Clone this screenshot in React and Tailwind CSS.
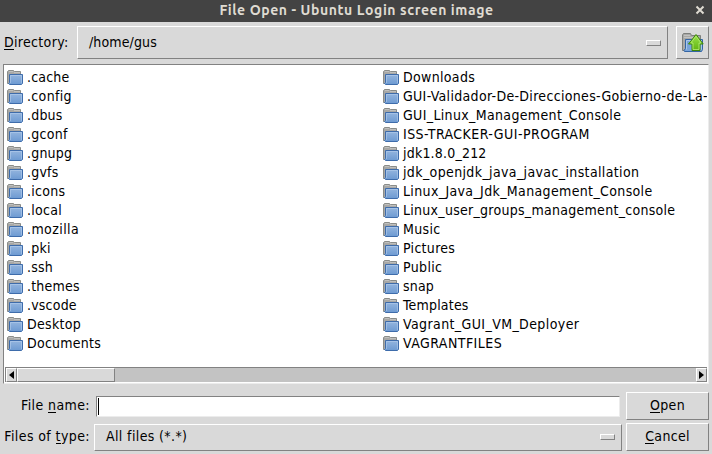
const leftFiles = [
  { name: '.cache' }, { name: '.config', tracking: 'tracking-[0.34px]' }, { name: '.dbus' },
  { name: '.gconf', tracking: 'tracking-[0.3px]' },
  { name: '.gnupg' }, { name: '.gvfs' }, { name: '.icons', tracking: 'tracking-[0.3px]' },
  { name: '.local', tracking: 'tracking-[0.3px]' },
  { name: '.mozilla', tracking: 'tracking-[0.42px]' }, { name: '.pki' }, { name: '.ssh' },
  { name: '.themes' }, { name: '.vscode' }, { name: 'Desktop', tracking: 'tracking-[0.3px]' },
  { name: 'Documents', tracking: 'tracking-[0.25px]' },
];

const rightFiles = [
  { name: 'Downloads', tracking: 'tracking-[0.33px]' },
  { name: 'GUI-Validador-De-Direcciones-Gobierno-de-La-', tracking: 'tracking-[0.32px]' },
  { name: 'GUI_Linux_Management_Console', tracking: 'tracking-[0.35px]' },
  { name: 'ISS-TRACKER-GUI-PROGRAM', tracking: 'tracking-[0.45px]' },
  { name: 'jdk1.8.0_212', tracking: 'tracking-[0.2px]' },
  { name: 'jdk_openjdk_java_javac_installation', tracking: 'tracking-[0.37px]' },
  { name: 'Linux_Java_Jdk_Management_Console', tracking: 'tracking-[0.36px]' },
  { name: 'Linux_user_groups_management_console', tracking: 'tracking-[0.28px]' },
  { name: 'Music', tracking: 'tracking-[0.35px]' }, { name: 'Pictures', tracking: 'tracking-[0.3px]' },
  { name: 'Public', tracking: 'tracking-[0.35px]' }, { name: 'snap' },
  { name: 'Templates', tracking: 'tracking-[0.2px]' },
  { name: 'Vagrant_GUI_VM_Deployer', tracking: 'tracking-[0.4px]' },
  { name: 'VAGRANTFILES', tracking: 'tracking-[0.45px]' },
];

const raised = 'border border-t-white border-l-white border-r-[#828282] border-b-[#828282] bg-[#d9d9d9]';

function FolderIcon() {
  return (
    <svg width="16" height="15" viewBox="0 0 16 15" className="block shrink-0">
      <defs>
        <linearGradient id="folderBlue" x1="0" y1="0" x2="0" y2="1">
          <stop offset="0" stopColor="#94b5de" />
          <stop offset="1" stopColor="#6d9ad2" />
        </linearGradient>
      </defs>
      <path d="M.5 13.500V1.500L1.500 .5H6.500L7.500 1.500H13.500V13.500Z" fill="#a8a8a6" stroke="#8a8c89" />
      <path d="M2 1.500H6M7 2.500H13" stroke="#c0c0be" />
      <path d="M2.500 4.500H15.500V13.500L14.500 14.500H2.500L1.500 13.500L2.500 12.500Z" fill="url(#folderBlue)" stroke="#3e6cab" strokeLinejoin="round" />
      <path d="M3.500 13V5.500H14.500V13" fill="none" stroke="#b8d0ec" strokeOpacity=".55" />
    </svg>
  );
}

function UpFolderIcon() {
  return (
    <svg width="22" height="20" viewBox="0 0 22 20" className="block">
      <defs>
        <linearGradient id="arrowGreen" x1="0" y1="0" x2="0" y2="1">
          <stop offset="0" stopColor="#9be34c" />
          <stop offset="1" stopColor="#5fb30e" />
        </linearGradient>
      </defs>
      <path d="M.5 17.500V2L1.500 .5H8.500L9.500 2.500H18.500V17.500Z" fill="#a8a8a6" stroke="#7d7f7c" />
      <path d="M2 2.500H8M2 4.500H17" stroke="#c2c2c0" />
      <path d="M3.500 6.500H20.500V16.500L19.500 18.500H2.500L2 17.500L3.500 15.500Z" fill="#78a4d9" stroke="#3465a4" strokeLinejoin="round" />
      <path d="M4.500 16.500V7.500H19.500V16.500" fill="none" stroke="#a9c7ea" />
      <path d="M14 1.500L21.200 11H18V17.500H10V11H6.500Z" fill="url(#arrowGreen)" stroke="#3e8608" strokeLinejoin="round" />
      <path d="M14 3.300L19 10H17V16.500H11V10H8.800Z" fill="none" stroke="#b7ec78" strokeOpacity=".8" />
    </svg>
  );
}

function FileColumn({ files, className }) {
  return (
    <ul className={className}>
      {files.map(({ name, tracking = 'tracking-[0.2px]' }) => (
        <li key={name} className="flex h-[19px] items-center gap-1 whitespace-nowrap">
          <FolderIcon />
          <span className={tracking}>{name}</span>
        </li>
      ))}
    </ul>
  );
}

function Mnemonic({ children }) {
  return <span className="inline-block h-[16px] border-b border-black leading-[16px]">{children}</span>;
}

function MenuIndicator() {
  return <span className="h-[6px] w-[15px] border border-t-white border-l-white border-r-[#828282] border-b-[#828282]" />;
}

export default function App() {
  return (
    <div className="flex h-[454px] w-[712px] flex-col overflow-hidden bg-[#d9d9d9] font-['DejaVu_Sans_Condensed','DejaVu_Sans',sans-serif] text-[14px] leading-[19px] text-black [font-stretch:condensed]">
      <header className="flex h-[22px] shrink-0 items-center bg-[#434343] text-[#dfdbd2]">
        <h1 className="w-[712px] shrink-0 pb-[2px] pl-px text-center font-['Ubuntu','Noto_Sans',sans-serif] text-[14px] font-bold tracking-[0.58px] [font-stretch:normal]">
          File Open - Ubuntu Login screen image
        </h1>
        <svg width="10" height="10" viewBox="0 0 10 10" className="-mt-[2px] -ml-[17px] shrink-0">
          <path d="M1.500 1.500L8.500 8.500M8.500 1.500L1.500 8.500" stroke="#dfdbd2" strokeWidth="2" />
        </svg>
      </header>

      <div className="mt-[4px] flex h-[33px] shrink-0 items-center">
        <label className="w-[77px] pl-[4px] tracking-[0.32px]"><Mnemonic>D</Mnemonic>irectory:</label>
        <button className={`flex h-[33px] w-[591px] items-center justify-between pr-[6px] pl-[11px] ${raised}`}>
          <span className="tracking-[0.12px]">/home/gus</span>
          <MenuIndicator />
        </button>
        <button className={`ml-[8px] flex h-[33px] w-[33px] items-center justify-center ${raised}`}>
          <UpFolderIcon />
        </button>
      </div>

      <main className="mt-[5px] ml-[3px] flex h-[320px] w-[706px] shrink-0 flex-col border border-t-[#828282] border-r-[#ececec] border-b-[#ececec] border-l-[#828282] bg-white">
        <div className="flex h-[302px] pt-[3px] pl-[3px]">
          <FileColumn files={leftFiles} className="w-[376px] shrink-0" />
          <FileColumn files={rightFiles} className="w-[324px] overflow-hidden" />
        </div>
        <div className="ml-px flex h-[15px] w-[702px] border-t border-l border-[#828282] bg-[#c3c3c3]">
          <div className={`flex h-[14px] w-[11px] items-center justify-center ${raised}`}>
            <svg width="5" height="8" viewBox="0 0 5 8"><path d="M5 0V8L0 4Z" /></svg>
          </div>
          <div className={`h-[14px] w-[98px] ${raised}`} />
          <div className={`ml-auto flex h-[14px] w-[11px] items-center justify-center ${raised}`}>
            <svg width="5" height="8" viewBox="0 0 5 8"><path d="M0 0V8L5 4Z" /></svg>
          </div>
        </div>
      </main>

      <div className="mt-[8px] flex h-[28px] shrink-0 items-center">
        <label className="w-[96px] pr-[6px] pb-[2px] text-right tracking-[0.4px]">File <Mnemonic>n</Mnemonic>ame:</label>
        <div className="flex h-[21px] w-[524px] items-center border border-t-[#828282] border-r-[#ececec] border-b-[#ececec] border-l-[#828282] bg-white pl-px">
          <span className="h-[17px] w-px bg-black" />
        </div>
        <button className={`ml-[6px] h-[28px] w-[83px] pb-[2px] tracking-[0.35px] ${raised}`}><Mnemonic>O</Mnemonic>pen</button>
      </div>

      <div className="mt-[3px] flex h-[28px] shrink-0 items-center">
        <label className="w-[94px] pr-[4px] pb-[2px] text-right tracking-[0.4px]">Files of <Mnemonic>t</Mnemonic>ype:</label>
        <button className={`flex h-[27px] w-[528px] items-center justify-between pr-[6px] pl-[11px] ${raised}`}>
          <span className="pb-[2px] tracking-[0.37px]">All files (*.*)</span>
          <MenuIndicator />
        </button>
        <button className={`ml-[4px] h-[28px] w-[83px] pb-[2px] tracking-[0.3px] ${raised}`}><Mnemonic>C</Mnemonic>ancel</button>
      </div>
    </div>
  );
}
